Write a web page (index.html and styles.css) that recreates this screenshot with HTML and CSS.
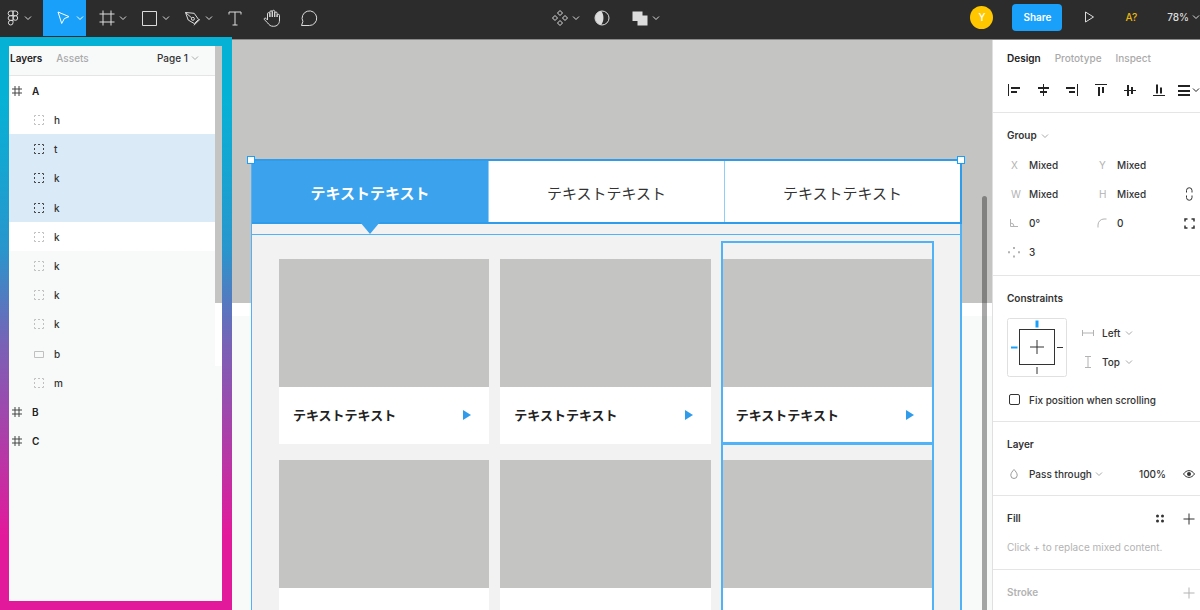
FILE: index.html
```html
<!DOCTYPE html>
<html lang="en">
<head>
<meta charset="utf-8">
<title>Design editor</title>
<link rel="stylesheet" href="styles.css">
</head>
<body>
<svg class="sprite" aria-hidden="true">
  <symbol id="chev" viewBox="0 0 10 10"><path d="M2 3.500l3 3 3-3"/></symbol>
  <symbol id="hash" viewBox="0 0 10 10"><path d="M3 0v10M7 0v10M0 3h10M0 7h10"/></symbol>
  <symbol id="group" viewBox="0 0 10 10"><path d="M.5 2V.5H2M4 .5h2M8 .5h1.500V2M9.500 4v2M9.500 8v1.500H8M6 9.500H4M2 9.500H.5V8M.5 6V4"/></symbol>
  <symbol id="plus" viewBox="0 0 14 14"><path d="M7 1.500v11M1.500 7h11"/></symbol>
</svg>

<header class="toolbar">
  <div class="tools">
    <button class="tool menu" aria-label="Menu"><svg class="ic" viewBox="0 0 18 18"><path d="M9 2H6.500a2.300 2.300 0 0 0 0 4.700H9zM9 2h2.500a2.300 2.300 0 0 1 0 4.700H9zM9 6.700H6.500a2.300 2.300 0 0 0 0 4.700H9zM9 11.400H6.500A2.300 2.300 0 1 0 9 13.700z"/><circle cx="11.400" cy="9" r="2.300"/></svg><svg class="chev"><use href="#chev"/></svg></button>
    <button class="tool active" aria-label="Move"><svg class="ic" viewBox="0 0 18 18"><path d="M3 3l11 4.600-4.700 2-2.600 4.900z"/></svg><svg class="chev"><use href="#chev"/></svg></button>
    <button class="tool" aria-label="Frame"><svg class="ic" viewBox="0 0 18 18"><path d="M5 1.500v15M13 1.500v15M1.500 5h15M1.500 13h15"/></svg><svg class="chev"><use href="#chev"/></svg></button>
    <button class="tool" aria-label="Rectangle"><svg class="ic" viewBox="0 0 18 18"><path d="M1.500 2.500h14v14h-14z"/></svg><svg class="chev"><use href="#chev"/></svg></button>
    <button class="tool" aria-label="Pen"><svg class="ic" viewBox="0 0 18 18"><path d="M1.500 3.500l8.700.8 4.400 6.200-4.300 4.100-6.100-3.600zM1.500 3.500l6.200 5.400M9.800 16.300l6.200-6"/><circle cx="8.900" cy="9.800" r="1.500"/></svg><svg class="chev"><use href="#chev"/></svg></button>
    <button class="tool plain" aria-label="Text"><svg class="ic" viewBox="0 0 18 18"><path d="M3 5.500V3h12v2.500M9 3v13M6.500 16h5"/></svg></button>
    <button class="tool plain" aria-label="Hand"><svg class="ic" viewBox="0 0 18 18"><path d="M4.500 11V4.800a1.200 1.200 0 0 1 2.400 0V8 3a1.200 1.200 0 0 1 2.400 0v5-5.500a1.200 1.200 0 0 1 2.400 0V8 4.200a1.200 1.200 0 0 1 2.400 0V8 6.500a1.200 1.200 0 0 1 2.400 0V11c0 4-2.300 6.300-6 6.300-3 0-4.300-1.200-5.700-3.300L1.300 10.600c-.6-1.200.8-2 1.700-1.200z"/></svg></button>
    <button class="tool plain" aria-label="Comment"><svg class="ic" viewBox="0 0 18 18"><path d="M1.500 16.500l1.400-4A7.300 7.300 0 1 1 9.300 16.500z"/></svg></button>
  </div>
  <div class="tools middle">
    <button class="tool narrow" aria-label="Components"><svg class="ic" viewBox="0 0 18 18"><path d="M9 1.500L11.500 4 9 6.500 6.500 4zM4 6.500L6.500 9 4 11.500 1.500 9zM14 6.500L16.500 9 14 11.500 11.500 9zM9 11.500l2.500 2.500L9 16.500 6.500 14z"/></svg><svg class="chev"><use href="#chev"/></svg></button>
    <button class="tool narrow" aria-label="Mask"><svg class="ic" viewBox="0 0 18 18"><circle cx="9" cy="9" r="7"/><path class="solid" d="M8 2.100a7 7 0 0 0 0 13.800c3.300-3 3.300-10.800 0-13.800z"/></svg></button>
    <button class="tool narrow" aria-label="Union"><svg class="ic" viewBox="0 0 18 18"><path class="solid" d="M1.500 2.500h10v4h5v10H6.500v-4.500h-5z"/></svg><svg class="chev"><use href="#chev"/></svg></button>
  </div>
  <div class="tools end">
    <span class="avatar">Y</span>
    <button class="share">Share</button>
    <button class="play" aria-label="Present"><svg class="ic" viewBox="0 0 18 18"><path d="M5.500 4l8 5-8 5z"/></svg></button>
    <button class="fonts">A?</button>
    <button class="zoom">78%<svg class="chev"><use href="#chev"/></svg></button>
  </div>
</header>

<div class="workspace">
  <aside class="frame">
    <div class="layers">
      <nav class="head">
        <button class="tab on">Layers</button>
        <button class="tab">Assets</button>
        <span class="page"><select aria-label="Page"><option>Page 1</option></select><svg class="chev"><use href="#chev"/></svg></span>
      </nav>
      <ul class="tree">
        <li class="top white"><svg><use href="#hash"/></svg>A</li>
        <li class="white"><svg><use href="#group"/></svg>h</li>
        <li class="sel"><svg><use href="#group"/></svg>t</li>
        <li class="sel"><svg><use href="#group"/></svg>k</li>
        <li class="sel"><svg><use href="#group"/></svg>k</li>
        <li class="white"><svg><use href="#group"/></svg>k</li>
        <li><svg><use href="#group"/></svg>k</li>
        <li><svg><use href="#group"/></svg>k</li>
        <li><svg><use href="#group"/></svg>k</li>
        <li class="rect"><svg viewBox="0 0 10 10"><path d="M.5 2.500h9v6h-9z"/></svg>b</li>
        <li><svg><use href="#group"/></svg>m</li>
        <li class="top"><svg><use href="#hash"/></svg>B</li>
        <li class="top"><svg><use href="#hash"/></svg>C</li>
      </ul>
    </div>
  </aside>

  <main class="canvas">
    <div class="artboard">
      <div class="tabs">
        <div class="item current">テキストテキスト</div>
        <div class="item">テキストテキスト</div>
        <div class="item">テキストテキスト</div>
        <i class="handle left"></i><i class="handle right"></i>
      </div>
      <div class="band"></div>
      <div class="cards">
        <article class="card"><div class="photo"></div><p>テキストテキスト<i></i></p></article>
        <article class="card"><div class="photo"></div><p>テキストテキスト<i></i></p></article>
        <article class="card picked"><div class="photo"></div><p>テキストテキスト<i></i></p></article>
        <article class="card"><div class="photo"></div><p></p></article>
        <article class="card"><div class="photo"></div><p></p></article>
        <article class="card picked"><div class="photo"></div><p></p></article>
      </div>
    </div>
    <div class="scroll"></div>
  </main>

  <aside class="props">
    <div class="top-bar">
      <nav class="modes">
        <button class="tab on">Design</button>
        <button class="tab">Prototype</button>
        <button class="tab">Inspect</button>
      </nav>
      <div class="align">
        <button aria-label="Align left"><svg viewBox="0 0 14 14"><path class="thin" d="M1.500 1v12"/><path d="M4 5h9M4 9h6"/></svg></button>
        <button aria-label="Align horizontal centers"><svg viewBox="0 0 14 14"><path class="thin" d="M7.500 1v12"/><path d="M2 5h11M4 9h7"/></svg></button>
        <button aria-label="Align right"><svg viewBox="0 0 14 14"><path class="thin" d="M12.500 1v12"/><path d="M1 5h9M4 9h6"/></svg></button>
        <button aria-label="Align top"><svg viewBox="0 0 14 14"><path class="thin" d="M1 1.500h12"/><path d="M5 4v9M9 4v6"/></svg></button>
        <button aria-label="Align vertical centers"><svg viewBox="0 0 14 14"><path class="thin" d="M1 7.500h12"/><path d="M5 2v11M9 4v7"/></svg></button>
        <button aria-label="Align bottom"><svg viewBox="0 0 14 14"><path class="thin" d="M1 12.500h12"/><path d="M5 1.500v9M9 4.500v6"/></svg></button>
        <button class="more" aria-label="Distribute"><svg viewBox="0 0 14 14"><path d="M1 3h12M1 8h12M1 12h12"/></svg><svg class="chev"><use href="#chev"/></svg></button>
      </div>
    </div>

    <section class="group">
      <h2>Group<svg class="chev"><use href="#chev"/></svg></h2>
      <div class="fields">
        <label><span>X</span><input value="Mixed"></label>
        <label><span>Y</span><input value="Mixed"></label><b></b>
        <label><span>W</span><input value="Mixed"></label>
        <label><span>H</span><input value="Mixed"></label>
        <button aria-label="Constrain proportions"><svg viewBox="0 0 14 14"><path d="M4.500 5.500V3.500a2.500 2.500 0 0 1 5.500 0v2M4.500 8.500v2a2.500 2.500 0 0 0 5.500 0v-2"/></svg></button>
        <label><span><svg viewBox="0 0 12 12"><path d="M2.500 2v7.500H10M2.500 6a3.500 3.500 0 0 1 3.500 3.500"/></svg></span><input aria-label="Rotation" value="0°"></label>
        <label><span><svg viewBox="0 0 12 12"><path d="M2 10.500V8a6 6 0 0 1 6-6h2.500"/></svg></span><input aria-label="Corner radius" value="0"></label>
        <button aria-label="Independent corners"><svg class="heavy" viewBox="0 0 14 14"><path d="M3 5.500V3h2.500M9.500 3H12v2.500M12 9.500V12H9.500M5.500 12H3V9.500"/></svg></button>
        <label><span><svg viewBox="0 0 12 12"><path class="dot" d="M5 1h2v2H5zM5 9.500h2v2H5zM0 5.200h2v2H0zM10 5.200h2v2h-2z"/></svg></span><input aria-label="Count" value="3"></label>
      </div>
    </section>

    <section>
      <h2>Constraints</h2>
      <div class="constraints">
        <svg class="pin" viewBox="0 0 60 60"><rect class="edge" x=".5" y=".5" width="59" height="58" rx="2"/><rect x="12.500" y="11.500" width="35" height="35"/><path d="M30 22v14M23 29h14M50 29.500h6M30 49v7"/><path class="on" d="M4 29.500h6.500"/><path class="on wide" d="M30 2.500v7"/></svg>
        <div class="axes">
          <label><svg class="axis" viewBox="0 0 12 12"><path d="M.5 3v6M11.500 3v6M.5 6h11"/></svg><select class="short" aria-label="Horizontal"><option>Left</option></select><svg class="chev"><use href="#chev"/></svg></label>
          <label><svg class="axis" viewBox="0 0 12 12"><path d="M3 .5h6M3 11.500h6M6 .5v11"/></svg><select class="short" aria-label="Vertical"><option>Top</option></select><svg class="chev"><use href="#chev"/></svg></label>
        </div>
      </div>
      <label class="check"><input type="checkbox">Fix position when scrolling</label>
    </section>

    <section>
      <h2>Layer</h2>
      <div class="row">
        <svg class="drop" viewBox="0 0 12 12"><path d="M6 1.500C4.500 3.300 2.800 5 2.800 7.300a3.200 3.200 0 0 0 6.400 0C9.200 5 7.500 3.300 6 1.500z"/></svg>
        <select class="blend" aria-label="Blend mode"><option>Pass through</option></select><svg class="chev"><use href="#chev"/></svg>
        <input class="opacity" aria-label="Opacity" value="100%">
        <button aria-label="Visibility"><svg viewBox="0 0 14 14"><path d="M1.500 7c3-4.500 8-4.500 11 0-3 4.500-8 4.500-11 0z"/><circle class="dot" cx="7" cy="7" r="2"/></svg></button>
      </div>
    </section>

    <section>
      <div class="row"><h2>Fill</h2><button class="styles" aria-label="Styles"><svg viewBox="0 0 14 14"><g class="dot"><circle cx="4.500" cy="4" r="1.500"/><circle cx="9.500" cy="4" r="1.500"/><circle cx="4.500" cy="9" r="1.500"/><circle cx="9.500" cy="9" r="1.500"/></g></svg></button><button aria-label="Add fill"><svg><use href="#plus"/></svg></button></div>
      <p>Click + to replace mixed content.</p>
    </section>

    <section class="off">
      <div class="row"><h2>Stroke</h2><button aria-label="Add stroke"><svg><use href="#plus"/></svg></button></div>
    </section>
  </aside>
</div>
</body>
</html>
```

FILE: styles.css
```css
* { box-sizing: border-box; }

body {
  margin: 0;
  height: 100vh;
  overflow: hidden;
  display: flex;
  flex-direction: column;
  font: 10px/16px Inter, "Noto Sans CJK JP", sans-serif;
  font-weight: 500;
  color: #333;
}

button, input, select {
  margin: 0;
  padding: 0;
  border: 0;
  background: none;
  font: inherit;
  color: inherit;
  appearance: none;
}

svg {
  flex: none;
  fill: none;
  stroke: currentColor;
}

h2, p, ul { margin: 0; padding: 0; }
h2 { font-size: 10px; font-weight: 600; line-height: 29px; }

.sprite { position: absolute; width: 0; height: 0; }
.chev { width: 10px; height: 10px; }

/* Toolbar */
.toolbar {
  flex: none;
  display: grid;
  grid-template-columns: 1fr auto 1fr;
  height: 40px;
  padding-bottom: 3px;
  background: #2c2c2c;
  border-bottom: 1px solid #8a8a8a;
  color: #dcdcdc;
}
.tools { display: flex; align-items: stretch; }
.tool {
  width: 43px;
  padding-left: 12px;
  display: flex;
  align-items: center;
  gap: 2px;
}
.ic { width: 18px; height: 18px; }
.ic .solid { fill: currentColor; stroke: none; }
.menu { padding-left: 4px; gap: 1px; }
.active { background: #18a0fb; color: #fff; }
.plain { width: 37px; padding-left: 11px; }
.middle { margin-left: 12px; gap: 12px; }
.middle .tool { width: auto; padding: 0; }
.middle .tool + .tool + .tool { padding-left: 8px; }
.end { justify-content: flex-end; align-items: center; padding-bottom: 2px; }
.avatar {
  width: 23px;
  height: 23px;
  margin-right: 19px;
  border-radius: 50%;
  background: #ffc700;
  color: #fff;
  line-height: 23px;
  text-align: center;
}
.share {
  width: 50px;
  height: 27px;
  margin-right: 18px;
  border-radius: 4px;
  background: #18a0fb;
  color: #fff;
  font-weight: 600;
}
.play { height: 18px; margin-right: 27px; }
.fonts { margin-right: 30px; color: #e8b50c; }
.zoom { display: flex; align-items: center; gap: 2px; margin-right: -1px; }

/* Workspace */
.workspace {
  flex: 1;
  min-height: 0;
  display: grid;
  grid-template-columns: 232px 1fr 208px;
  grid-template-rows: 100%;
}
.tab { color: #aaa; }
.tab.on { color: #222; font-weight: 600; }

/* Layers */
.frame {
  margin-top: -3px;
  padding: 9px 10px 9px 9px;
  background: linear-gradient(#05b2d6 10%, #2896cc 37%, #7a61b6 54%, #e3199b 87%);
}
.layers {
  height: 100%;
  display: flex;
  flex-direction: column;
  border-right: 7px solid #f8fafa;
  border-image: linear-gradient(#c4c4c2 257px, #fff 257px 320px, #f8fafa 320px) 0 7 0 0;
  background: #f8fafa;
}
.head {
  display: flex;
  align-items: center;
  height: 30px;
  padding: 0 15px 5px 1px;
  gap: 14px;
  border-bottom: 1px solid #e5e5e5;
}
.page { margin-left: auto; display: flex; align-items: center; gap: 2px; }
.page .chev, h2 .chev, .axes .chev, .row .chev { color: #aaa; }
.tree {
  display: grid;
  grid-auto-rows: 1fr;
  min-height: 380px;
  list-style: none;
}
.tree li {
  display: flex;
  align-items: center;
  gap: 10px;
  padding-left: 25px;
}
.tree svg { width: 10px; height: 10px; color: #c0c0c0; }
.tree .top { padding-left: 3px; font-weight: 600; color: #222; }
.tree .top svg { color: #444; }
.tree .white { background: #fff; }
.tree .sel { background: #daeaf7; }
.tree .sel svg { color: #444; }

/* Canvas */
.canvas {
  position: relative;
  min-width: 0;
  overflow: hidden;
  padding: 119px 30px 0 19px;
  background: linear-gradient(#c4c4c2 263px, #fff 263px 276px, #f8fafa 276px);
}
.artboard {
  border: solid #50b2f7;
  border-width: 0 2px 0 1px;
  background: #f2f2f2;
}
.tabs {
  position: relative;
  display: grid;
  grid-template-columns: repeat(3, 1fr);
  height: 65px;
  margin-right: -2px;
  border: solid #2f9ceb;
  border-width: 2px 2px 2px 0;
  background: #fff;
}
.item {
  position: relative;
  display: flex;
  align-items: center;
  justify-content: center;
  padding-top: 4px;
  font-size: 15px;
  font-weight: 400;
}
.item + .item { border-left: 1px solid #8fcdfa; }
.item.current { background: #3ba2ed; color: #fff; font-weight: 700; }
.current::after {
  content: "";
  position: absolute;
  top: 100%;
  left: 50%;
  margin-left: -10px;
  border: solid transparent;
  border-width: 12px 10px 0;
  border-top-color: #3ba2ed;
}
.handle {
  position: absolute;
  top: -5px;
  width: 8px;
  height: 8px;
  border: 1px solid #18a0fb;
  background: #fff;
}
.handle.left { left: -5px; }
.handle.right { right: -5px; }
.band { height: 11px; border-bottom: 1px solid #50b2f7; }
.cards {
  display: grid;
  grid-template-columns: repeat(3, 1fr);
  gap: 16px 11px;
  padding: 24px 28px 24px 27px;
}
.card { position: relative; background: #fff; }
.photo { height: 128px; background: #c4c4c2; }
.card p {
  display: flex;
  align-items: center;
  justify-content: space-between;
  height: 57px;
  padding: 0 18px 2px 14px;
  font-size: 13px;
  font-weight: 700;
  color: #222;
}
.card i {
  border: solid transparent;
  border-width: 5px 0 5px 8px;
  border-left-color: #2f9ceb;
}
.picked::after {
  content: "";
  position: absolute;
  inset: -18px -2px -1px -1px;
  border: 2px solid #50b2f7;
}
.scroll {
  position: absolute;
  top: 156px;
  right: 5px;
  bottom: 0;
  width: 5px;
  border-radius: 3px 3px 0 0;
  background: rgba(0, 0, 0, .34);
}

/* Properties */
.props { border-left: 1px solid #e0e0e0; background: #fff; overflow: hidden; }
.props section { padding: 8px 4px 7px 14px; border-bottom: 1px solid #e5e5e5; }
.props .group { padding-bottom: 9px; }
.top-bar {
  height: 73px;
  padding: 10px 0 0 14px;
  border-bottom: 1px solid #e5e5e5;
}
.modes { display: flex; gap: 14px; }
.align { display: flex; gap: 15px; padding-top: 17px; }
.align button { display: flex; align-items: center; }
.align svg { width: 14px; height: 14px; color: #222; stroke-width: 2; }
.align .thin { stroke-width: 1; }
.align .more { margin-left: -4px; }
.align .more .chev { width: 10px; height: 10px; stroke-width: 1; }
h2 .chev { margin-left: 3px; vertical-align: middle; }

.fields {
  display: grid;
  grid-template-columns: 88px 1fr 14px;
  grid-auto-rows: 29px;
  align-items: center;
}
.fields label { display: flex; align-items: center; min-width: 0; }
.fields span {
  flex: none;
  display: flex;
  width: 22px;
  padding-left: 4px;
  color: #b3b3b3;
  font-weight: 400;
}
.fields span svg { width: 12px; height: 12px; margin-left: -3px; }
.fields input { width: 60px; }
.props button svg { display: block; width: 14px; height: 14px; }
.props .dot { fill: currentColor; stroke: none; }
.props .heavy { stroke-width: 1.5; }

.constraints { display: flex; height: 72px; padding-top: 5px; gap: 15px; }
.pin { width: 60px; height: 60px; }
.pin .edge { stroke: #e0e0e0; }
.pin .on { stroke: #18a0fb; stroke-width: 2; }
.pin .wide { stroke-width: 3; }
.axes label { display: flex; align-items: center; height: 29px; }
.axis { width: 12px; height: 12px; margin-right: 8px; color: #b3b3b3; }
.short { width: 22px; }
.check { display: flex; align-items: center; height: 29px; gap: 9px; }
.check input {
  width: 11px;
  height: 11px;
  margin-left: 2px;
  border: 1px solid #333;
  border-radius: 2px;
}
.row { display: flex; align-items: center; height: 29px; }
.row h2 { margin-right: auto; }
.drop { width: 12px; height: 12px; margin: 0 9px 0 1px; color: #999; }
.blend { width: 65px; }
.opacity { width: 28px; margin: 0 15px 0 auto; }
.styles { margin-right: 15px; }
.props section > p { line-height: 29px; color: #b3b3b3; font-weight: 400; }
.off { color: #b3b3b3; }
```
